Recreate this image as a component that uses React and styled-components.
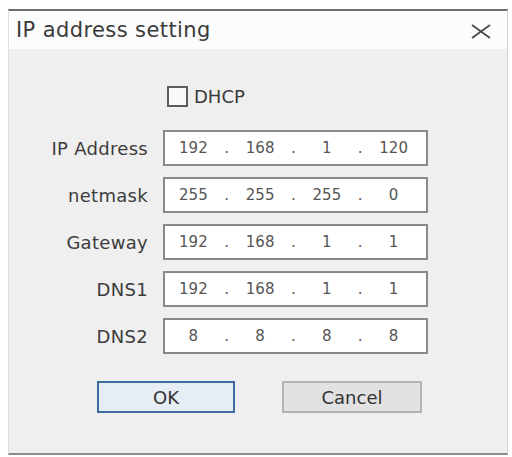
import React from "react";
import styled, { createGlobalStyle } from "styled-components";

const Global = createGlobalStyle`
  html, body { margin: 0; padding: 0; background: #ffffff; }
  body { font-family: "DejaVu Sans", "Liberation Sans", sans-serif; }
`;

const Dialog = styled.div`
  margin: 9px 0 0 8px;
  width: 500px;
  height: 446px;
  box-sizing: border-box;
  display: flex;
  flex-direction: column;
  border-top: 2px solid #6f6f6f;
  border-bottom: 2px solid #8c8c8c;
  border-left: 1px solid #dedede;
  border-right: 1px solid #cfcfcf;
  background: #efefef;
`;

const TitleBar = styled.div`
  height: 38px;
  flex: none;
  background: #fcfcfc;
  display: flex;
  align-items: center;
  justify-content: space-between;
  padding: 0 15px 0 7px;
`;

const Title = styled.span`
  font-size: 21px;
  letter-spacing: 0.4px;
  color: #3a3a3a;
`;

const Close = styled.svg`
  width: 22px;
  height: 15px;
  margin-top: 2px;
`;

const Body = styled.div`
  flex: 1;
  display: flex;
  flex-direction: column;
  padding-top: 37px;
`;

const CheckRow = styled.label`
  display: flex;
  align-items: center;
  gap: 6px;
  margin-left: 158px;
  height: 21px;
  font-size: 18px;
  color: #3a3a3a;
`;

const Box = styled.span`
  width: 21px;
  height: 21px;
  box-sizing: border-box;
  border: 2px solid #5c5c5c;
  background: #fafafa;
`;

const Form = styled.div`
  display: grid;
  grid-template-columns: 139px 265px;
  grid-auto-rows: 36px;
  column-gap: 15px;
  row-gap: 11px;
  margin-top: 23px;
`;

const Label = styled.div`
  display: flex;
  align-items: center;
  justify-content: flex-end;
  font-size: 18px;
  letter-spacing: 0.3px;
  color: #3c3c3c;
`;

const Field = styled.div`
  box-sizing: border-box;
  border: 2px solid #8a8a8a;
  background: #ffffff;
  display: flex;
  align-items: center;
  padding: 0 4px 0 0;
  font-size: 15px;
  color: #555555;
`;

const Seg = styled.span`
  flex: 1;
  text-align: center;
`;

const Dot = styled.span`
  width: 10px;
  text-align: center;
`;

const Buttons = styled.div`
  display: flex;
  gap: 47px;
  margin: 27px 0 0 88px;
`;

const Button = styled.div`
  box-sizing: border-box;
  width: ${(p) => (p.$primary ? "138px" : "140px")};
  height: 32px;
  display: flex;
  align-items: center;
  justify-content: center;
  font-size: 18px;
  color: #333333;
  background: ${(p) => (p.$primary ? "#e6edf4" : "#e2e2e2")};
  border: 2px solid ${(p) => (p.$primary ? "#3d6d9f" : "#b3b3b3")};
`;

const rows = [
  ["IP Address", ["192", "168", "1", "120"]],
  ["netmask", ["255", "255", "255", "0"]],
  ["Gateway", ["192", "168", "1", "1"]],
  ["DNS1", ["192", "168", "1", "1"]],
  ["DNS2", ["8", "8", "8", "8"]],
];

export default function App() {
  return (
    <>
      <Global />
      <Dialog>
        <TitleBar>
          <Title>IP address setting</Title>
          <Close viewBox="0 0 22 15">
            <path d="M2 1 L20 14 M20 1 L2 14" stroke="#4a4a4a" strokeWidth="1.8" fill="none" />
          </Close>
        </TitleBar>
        <Body>
          <CheckRow>
            <Box />
            DHCP
          </CheckRow>
          <Form>
            {rows.map(([label, parts]) => (
              <React.Fragment key={label}>
                <Label>{label}</Label>
                <Field>
                  {parts.map((p, i) => (
                    <React.Fragment key={i}>
                      {i > 0 && <Dot>.</Dot>}
                      <Seg>{p}</Seg>
                    </React.Fragment>
                  ))}
                </Field>
              </React.Fragment>
            ))}
          </Form>
          <Buttons>
            <Button $primary>OK</Button>
            <Button>Cancel</Button>
          </Buttons>
        </Body>
      </Dialog>
    </>
  );
}
